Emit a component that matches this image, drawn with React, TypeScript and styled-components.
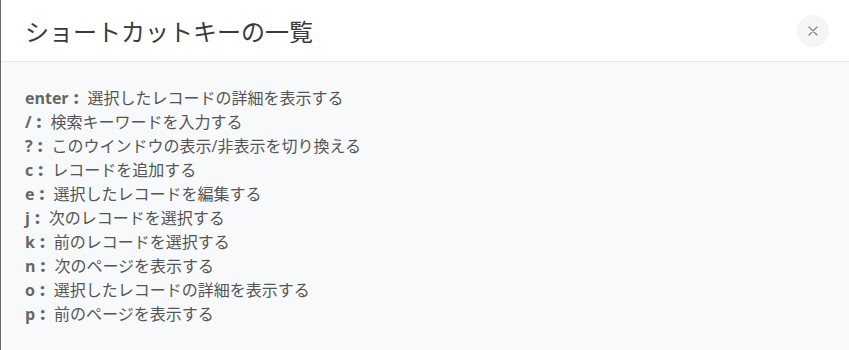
import React from "react";
import styled, { createGlobalStyle } from "styled-components";

const GlobalStyle = createGlobalStyle`
  html, body {
    margin: 0;
    padding: 0;
    background: #ffffff;
  }
  body {
    font-family: "Open Sans", "Noto Sans CJK JP", sans-serif;
  }
`;

interface IShortcut {
  key: string;
  text: string;
}

const shortcuts: IShortcut[] = [
  { key: "enter", text: "選択したレコードの詳細を表示する" },
  { key: "/", text: "検索キーワードを入力する" },
  { key: "?", text: "このウインドウの表示/非表示を切り換える" },
  { key: "c", text: "レコードを追加する" },
  { key: "e", text: "選択したレコードを編集する" },
  { key: "j", text: "次のレコードを選択する" },
  { key: "k", text: "前のレコードを選択する" },
  { key: "n", text: "次のページを表示する" },
  { key: "o", text: "選択したレコードの詳細を表示する" },
  { key: "p", text: "前のページを表示する" },
];

const Modal = styled.div`
  width: 849px;
  height: 350px;
  box-sizing: border-box;
  border-left: 1px solid #6b6b6b;
  display: flex;
  flex-direction: column;
  overflow: hidden;
`;

const Header = styled.div`
  height: 62px;
  flex: none;
  box-sizing: border-box;
  display: flex;
  align-items: center;
  justify-content: space-between;
  padding: 0 20px 0 24px;
  background: #ffffff;
  border-bottom: 1px solid #e4e7e9;
`;

const Title = styled.h2`
  margin: 0;
  font-size: 24px;
  font-weight: 400;
  color: #3a3a3a;
  line-height: 32px;
  font-family: "Noto Sans CJK JP", sans-serif;
`;

const CloseButton = styled.button`
  width: 32px;
  height: 32px;
  border: none;
  border-radius: 50%;
  background: #f4f5f7;
  display: flex;
  align-items: center;
  justify-content: center;
  padding: 0;
  cursor: pointer;
`;

const Body = styled.div`
  flex: 1;
  background: #f8f9fb;
  padding: 24px 24px;
`;

const List = styled.ul`
  list-style: none;
  margin: 0;
  padding: 0;
`;

const Row = styled.li`
  font-size: 16px;
  line-height: 24px;
  color: #555555;
  white-space: nowrap;
`;

const Key = styled.span`
  font-weight: 700;
  color: #666666;
`;

const Colon = styled.span`
  font-weight: 800;
  color: #666666;
  font-size: 17px;
  margin: 0 9px 0 5px;
`;

const Text = styled.span`
  font-family: "Open Sans", "Noto Sans CJK JP", sans-serif;
`;

const CloseIcon = () => (
  <svg width="10" height="10" viewBox="0 0 10 10">
    <path d="M1 1 L9 9 M9 1 L1 9" stroke="#8a8a8a" strokeWidth="1.4" strokeLinecap="round" />
  </svg>
);

export default function App() {
  return (
    <>
      <GlobalStyle />
      <Modal>
        <Header>
          <Title>ショートカットキーの一覧</Title>
          <CloseButton aria-label="close">
            <CloseIcon />
          </CloseButton>
        </Header>
        <Body>
          <List>
            {shortcuts.map((s) => (
              <Row key={s.key}>
                <Key>{s.key}</Key>
                <Colon>:</Colon>
                <Text>{s.text}</Text>
              </Row>
            ))}
          </List>
        </Body>
      </Modal>
    </>
  );
}
